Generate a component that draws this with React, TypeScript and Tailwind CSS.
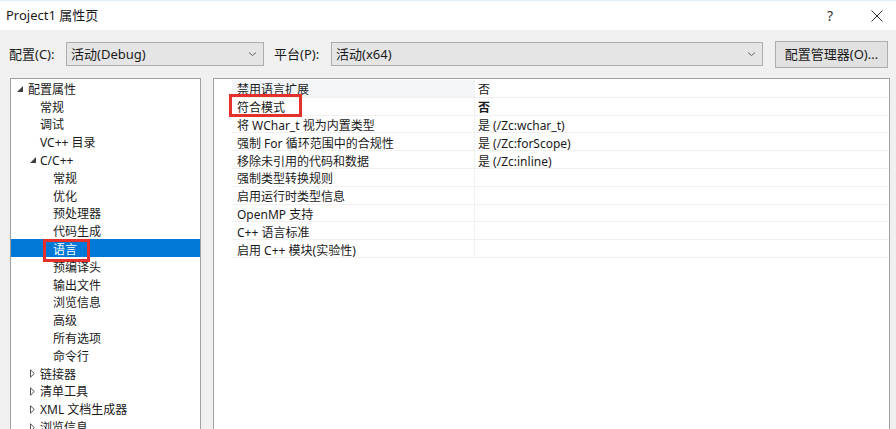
import React from 'react';

const FONT = "font-['Noto_Sans','Noto_Sans_CJK_SC',sans-serif]";

type TreeItem = {
  label: string;
  level: 0 | 1 | 2;
  toggle?: 'open' | 'closed';
  selected?: boolean;
  marked?: boolean;
};

const tree: TreeItem[] = [
  { label: '配置属性', level: 0, toggle: 'open' },
  { label: '常规', level: 1 },
  { label: '调试', level: 1 },
  { label: 'VC++ 目录', level: 1 },
  { label: 'C/C++', level: 1, toggle: 'open' },
  { label: '常规', level: 2 },
  { label: '优化', level: 2 },
  { label: '预处理器', level: 2 },
  { label: '代码生成', level: 2 },
  { label: '语言', level: 2, selected: true, marked: true },
  { label: '预编译头', level: 2 },
  { label: '输出文件', level: 2 },
  { label: '浏览信息', level: 2 },
  { label: '高级', level: 2 },
  { label: '所有选项', level: 2 },
  { label: '命令行', level: 2 },
  { label: '链接器', level: 1, toggle: 'closed' },
  { label: '清单工具', level: 1, toggle: 'closed' },
  { label: 'XML 文档生成器', level: 1, toggle: 'closed' },
  { label: '浏览信息', level: 1, toggle: 'closed' },
];

const props: { name: string; value: string; bold?: boolean; marked?: boolean; tint?: boolean }[] = [
  { name: '禁用语言扩展', value: '否', tint: true },
  { name: '符合模式', value: '否', bold: true, marked: true },
  { name: '将 WChar_t 视为内置类型', value: '是 (/Zc:wchar_t)' },
  { name: '强制 For 循环范围中的合规性', value: '是 (/Zc:forScope)' },
  { name: '移除未引用的代码和数据', value: '是 (/Zc:inline)' },
  { name: '强制类型转换规则', value: '' },
  { name: '启用运行时类型信息', value: '' },
  { name: 'OpenMP 支持', value: '' },
  { name: 'C++ 语言标准', value: '' },
  { name: '启用 C++ 模块(实验性)', value: '' },
];

function Chevron() {
  return (
    <svg width="9" height="6" viewBox="0 0 9 6" className="shrink-0">
      <path d="M1 1.5 L4.5 4.5 L8 1.5" fill="none" stroke="#606060" strokeWidth="1" />
    </svg>
  );
}

function Toggle({ kind }: { kind: 'open' | 'closed' }) {
  if (kind === 'open') {
    return (
      <svg width="6" height="6" viewBox="0 0 6 6" className="relative top-[1px]">
        <path d="M6 0 L6 6 L0 6 Z" fill="#404040" />
      </svg>
    );
  }
  return (
    <svg width="5" height="9" viewBox="0 0 5 9" className="relative top-[1px]">
      <path d="M0.5 0.8 L4.3 4.5 L0.5 8.2 Z" fill="none" stroke="#555" strokeWidth="1" />
    </svg>
  );
}

function Select({ value, width }: { value: string; width: string }) {
  return (
    <div
      className={`${width} h-[24px] bg-[#e5e5e5] border border-[#adadad] flex items-center justify-between pl-[4px] pr-[6px] text-[13px] text-[#1a1a1a]`}
    >
      <span>{value}</span>
      <Chevron />
    </div>
  );
}

export default function App() {
  return (
    <div className={`w-[896px] h-[429px] overflow-hidden bg-[#f0f0f0] ${FONT} text-[#1a1a1a] leading-none`}>
      {/* title bar */}
      <div className="h-[30px] bg-white border-t border-[#dcf0f8] flex items-center pl-[6px] pr-[13px]">
        <span className="text-[13px]">Project1 属性页</span>
        <span className="ml-auto text-[14px] text-[#333] mr-[38px]">?</span>
        <svg width="12" height="12" viewBox="0 0 12 12">
          <path d="M0.5 0.5 L11.5 11.5 M11.5 0.5 L0.5 11.5" stroke="#333" strokeWidth="1" />
        </svg>
      </div>

      {/* configuration row */}
      <div className="h-[48px] flex items-center pl-[9px] text-[13px]">
        <span className="w-[57px]">配置(C):</span>
        <Select value="活动(Debug)" width="w-[198px]" />
        <span className="ml-[10px] w-[57px]">平台(P):</span>
        <Select value="活动(x64)" width="w-[432px]" />
        <button className="ml-[12px] w-[113px] h-[27px] bg-[#e1e1e1] border border-[#adadad] text-[13px]">
          配置管理器(O)...
        </button>
      </div>

      {/* panels */}
      <div className="flex pl-[10px] gap-[12px] text-[12px]">
        <div className="w-[191px] h-[360px] bg-white border border-[#a0a0a0] border-b-0">
          {tree.map((item, i) => {
            const pad =
              item.level === 0 ? 'pl-[6px]' : item.level === 1 ? (item.toggle ? 'pl-[19px]' : 'pl-[29px]') : 'pl-[42px]';
            return (
              <div
                key={i}
                className={`h-[17.8px] flex items-center ${pad} ${item.selected ? 'bg-[#0078d7] text-white' : ''}`}
              >
                {item.toggle && (
                  <span className={`${item.level === 0 ? 'w-[11px]' : 'w-[10px]'} flex items-center`}>
                    <Toggle kind={item.toggle} />
                  </span>
                )}
                <span className="relative top-[2px]">
                  {item.label}
                  {item.marked && (
                    <span className="absolute left-[-10px] top-[-5px] w-[47px] h-[23px] border-[3px] border-[#e5302c]" />
                  )}
                </span>
              </div>
            );
          })}
        </div>

        <div className="w-[677px] h-[360px] bg-white border border-[#a0a0a0] border-b-0 pl-[18px] pt-[1px]">
          {props.map((p, i) => (
            <div key={i} className="flex h-[17.8px] border-b border-[#f0f0f0]">
              <div className={`w-[243px] flex items-center pl-[5px] border-r border-[#f0f0f0] ${p.tint ? 'bg-[#f3f5f9]' : ''}`}>
                <span className="relative top-[2px]">
                  {p.name}
                  {p.marked && (
                    <span className="absolute left-[-8px] top-[-8px] w-[73px] h-[23px] border-[3px] border-[#e5302c]" />
                  )}
                </span>
              </div>
              <div className={`flex-1 flex items-center pl-[3px] ${p.bold ? 'font-bold' : ''}`}>
                <span className="relative top-[2px]">{p.value}</span>
              </div>
            </div>
          ))}
        </div>
      </div>
    </div>
  );
}
